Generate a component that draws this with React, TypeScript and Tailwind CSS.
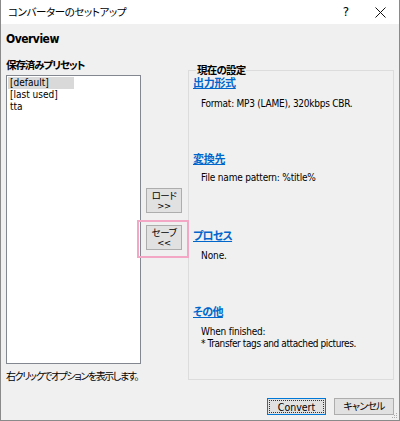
export default function App() {
  return (
    <div className="w-[400px] h-[421px] bg-[#f0f0f0] border-x border-b border-[#8a8a8a] flex flex-col text-[10px] text-black font-['DejaVu_Sans_Condensed','Noto_Sans_CJK_JP',sans-serif] [font-feature-settings:'palt'] overflow-hidden relative">
      <div className="h-[24px] bg-white flex items-center shrink-0">
        <span className="ml-[7px] text-[10.5px] tracking-[-0.4px] leading-[14px]">コンバーターのセットアップ</span>
        <span className="ml-auto mr-[26px] text-[12px] leading-[14px] font-['DejaVu_Sans',sans-serif]">?</span>
        <svg width="11" height="11" viewBox="0 0 11 11" className="mr-[13px]">
          <path d="M0.5 0.5 L10.5 10.5 M10.5 0.5 L0.5 10.5" stroke="#111" strokeWidth="1" />
        </svg>
      </div>
      <div className="flex-1 flex flex-col px-[5px]">
        <div className="mt-[6px] leading-[18px] text-[12px] tracking-[-0.5px] font-bold">Overview</div>
        <div className="flex mt-[10px]">
          <div className="w-[135px] flex flex-col shrink-0">
            <div className="leading-[14px] font-bold text-[10.5px] tracking-[-1.1px]">保存済みプリセット</div>
            <div className="mt-[3px] h-[289px] bg-white border border-[#828790] pt-[1px] px-[1px] leading-[12px]">
              <div className="w-[66px] h-[12px] bg-[#d9d9d9] pl-[2px]">[default]</div>
              <div className="h-[12px] pl-[2px]">[last used]</div>
              <div className="h-[12px] pl-[2px]">tta</div>
            </div>
            <div className="mt-[6px] leading-[14px] text-[10px] tracking-[-1.4px] whitespace-nowrap">右クリックでオプションを表示します。</div>
          </div>
          <div className="w-[47px] relative flex flex-col shrink-0">
            <div className="mt-[130px] ml-[5px] w-[36px] h-[25px] bg-[#e1e1e1] border border-[#adadad] flex flex-col items-center justify-center leading-[10px] text-[9.5px] tracking-[-0.5px]">
              <span>ロード</span>
              <span>&gt;&gt;</span>
            </div>
            <div className="mt-[12px] ml-[5px] w-[36px] h-[25px] bg-[#e1e1e1] border border-[#adadad] flex flex-col items-center justify-center leading-[10px] text-[9.5px] tracking-[-0.5px]">
              <span>セーブ</span>
              <span>&lt;&lt;</span>
            </div>
            <div className="absolute left-[-4px] top-[162px] w-[52px] h-[38px] border-2 border-[#f4a7c4]" />
          </div>
          <div className="w-[206px] h-[310px] mt-[12px] border border-[#dcdcdc] pl-[4px] flex flex-col shrink-0">
            <span className="-mt-[7px] ml-[3px] self-start px-[1px] bg-[#f0f0f0] leading-[12px] font-bold text-[10.5px] tracking-[-0.8px]">現在の設定</span>
            <div className="mt-[1px] flex flex-col leading-[13px]">
              <span className="text-[#0066cc] font-bold underline text-[11px] tracking-[-0.3px] self-start">出力形式</span>
              <span className="mt-[7px] ml-[8px] tracking-[-0.25px]">Format: MP3 (LAME), 320kbps CBR.</span>
              <span className="mt-[43px] text-[#0066cc] font-bold underline text-[11px] tracking-[-0.3px] self-start">変換先</span>
              <span className="mt-[5px] ml-[8px] tracking-[-0.2px]">File name pattern: %title%</span>
              <span className="mt-[46px] text-[#0066cc] font-bold underline text-[11px] tracking-[-0.8px] self-start">プロセス</span>
              <span className="mt-[6px] ml-[8px] tracking-[-0.1px]">None.</span>
              <span className="mt-[44px] text-[#0066cc] font-bold underline text-[11px] tracking-[-0.6px] self-start">その他</span>
              <span className="mt-[7px] ml-[8px] leading-[12px] tracking-[-0.2px]">When finished:</span>
              <span className="ml-[8px] leading-[12px] tracking-[-0.4px]">* Transfer tags and attached pictures.</span>
            </div>
          </div>
        </div>
        <div className="mt-auto mb-[5px] flex justify-end gap-[8px]">
          <div className="w-[59px] h-[17px] bg-[#e1e1e1] border border-[#0078d7] p-[1px]">
            <div className="w-full h-full border border-dotted border-[#333] flex items-center justify-center leading-[12px] text-[10.5px]">Convert</div>
          </div>
          <div className="w-[60px] h-[17px] bg-[#e1e1e1] border border-[#adadad] flex items-center justify-center leading-[12px] text-[10px] tracking-[-0.8px]">キャンセル</div>
        </div>
      </div>
      <svg width="6" height="6" viewBox="0 0 6 6" className="absolute right-[1px] bottom-[1px]">
        <rect x="4" y="0" width="1" height="1" fill="#aaa" />
        <rect x="2" y="2" width="1" height="1" fill="#aaa" />
        <rect x="4" y="2" width="1" height="1" fill="#aaa" />
        <rect x="0" y="4" width="1" height="1" fill="#aaa" />
        <rect x="2" y="4" width="1" height="1" fill="#aaa" />
        <rect x="4" y="4" width="1" height="1" fill="#aaa" />
      </svg>
    </div>
  );
}
